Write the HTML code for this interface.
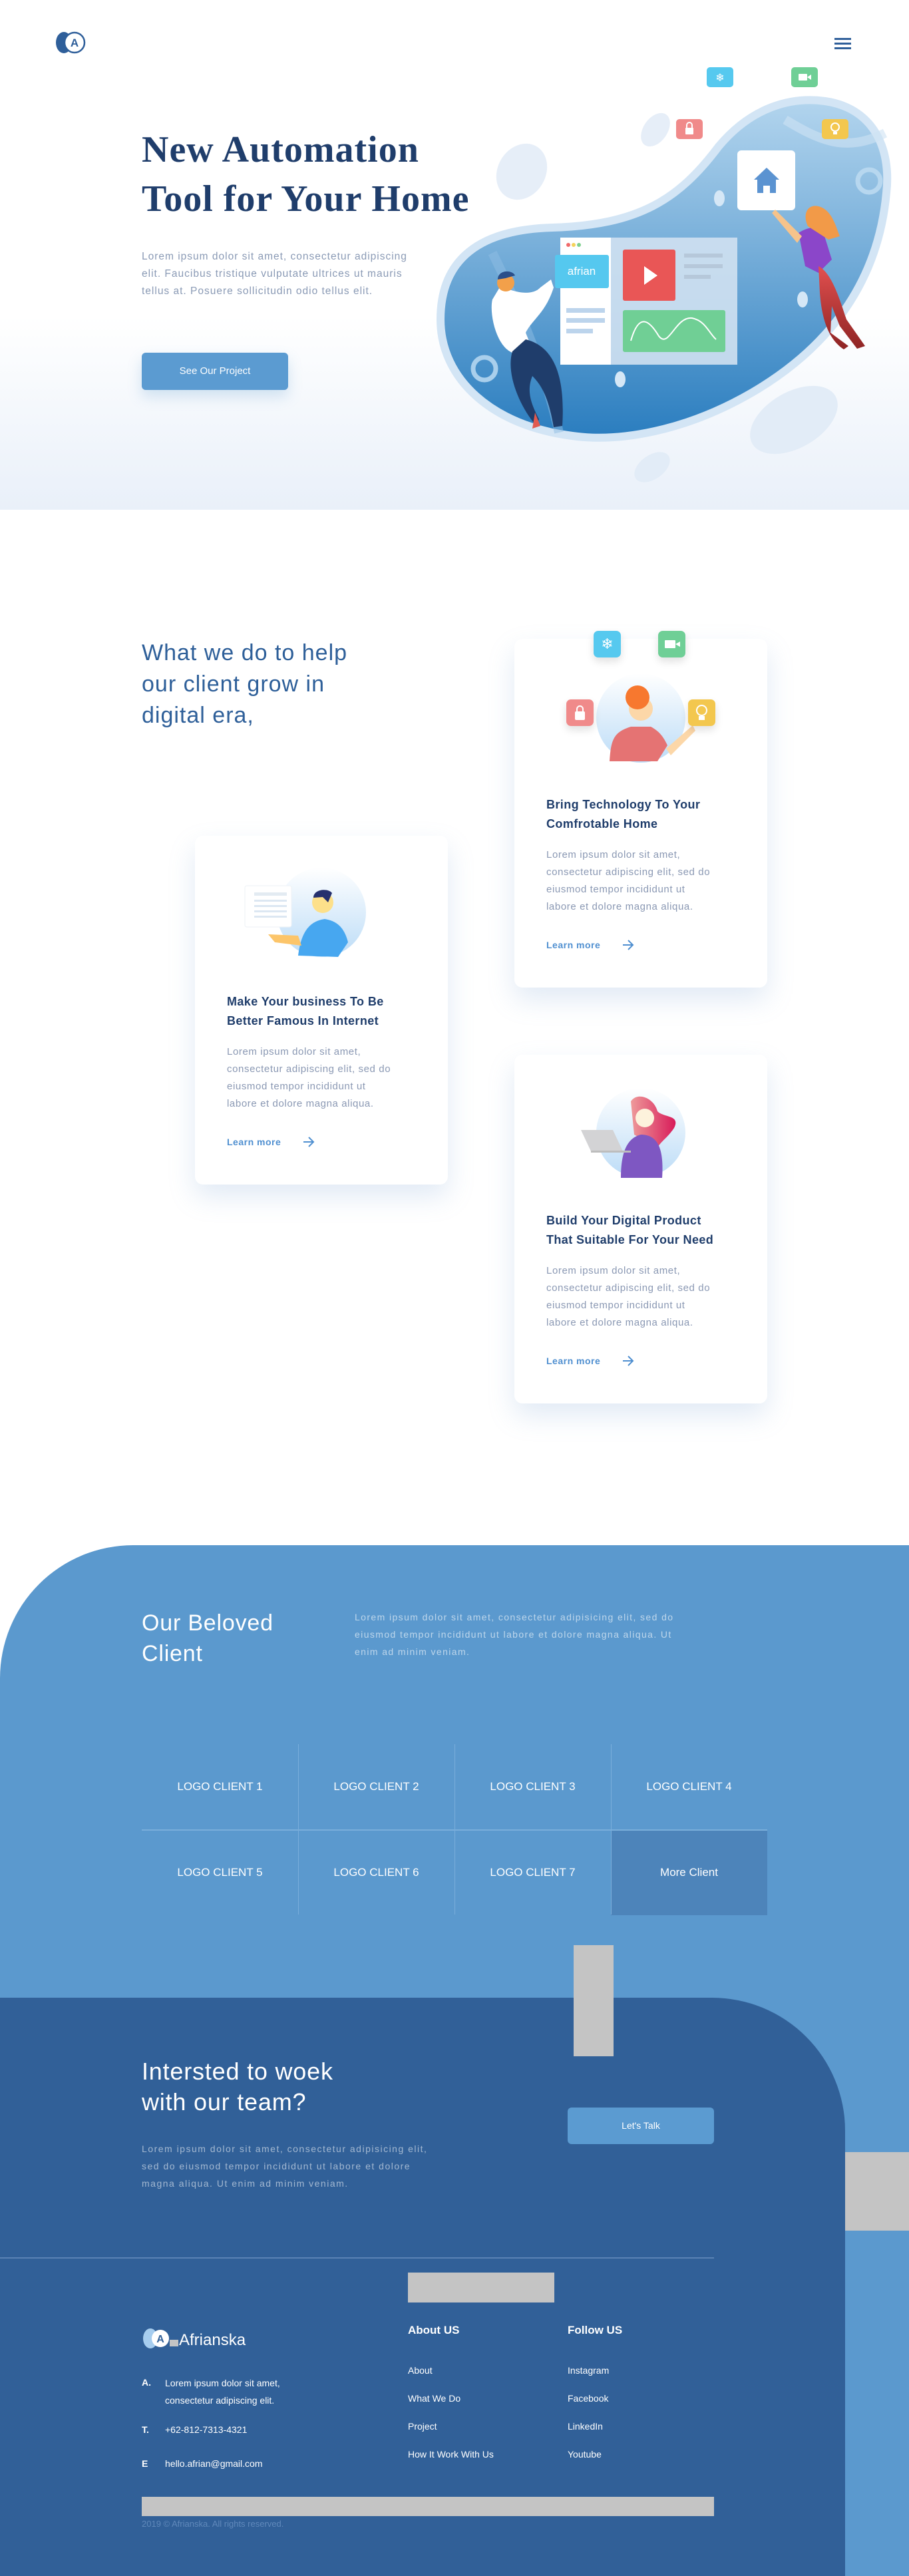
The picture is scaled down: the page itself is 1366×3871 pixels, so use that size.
<!DOCTYPE html>
<html><head><meta charset="utf-8">
<style>
*{margin:0;padding:0;box-sizing:border-box}
body{width:1366px;height:3871px;position:relative;font-family:"Liberation Sans",sans-serif;background:#fff;overflow:hidden}
.a{position:absolute}
.hero{left:0;top:0;width:1366px;height:766px;background:linear-gradient(#fff 0,#fff 62%,#e9f0f9 100%)}
h1{position:absolute;left:213px;top:188px;font-family:"Liberation Serif",serif;font-weight:bold;font-size:56px;line-height:74px;color:#1f3d6b;letter-spacing:1px;white-space:nowrap}
.hp{left:213px;top:373px;width:440px;font-size:15.5px;line-height:26px;color:#8a9ab5;white-space:nowrap;letter-spacing:1px}
.btn{background:#5b9bd1;color:#fff;border-radius:6px;text-align:center;font-size:15px;box-shadow:0 10px 20px rgba(91,155,209,.25)}
.h2{left:213px;top:958px;font-size:34px;line-height:47px;color:#2e5f99;letter-spacing:1px}
.card{width:380px;height:524px;background:#fff;border-radius:12px;box-shadow:0 18px 40px rgba(120,160,210,.22)}
.card .t{position:absolute;left:48px;top:235px;width:330px;font-size:18px;font-weight:bold;line-height:29px;color:#1f3d6b;letter-spacing:.4px;white-space:nowrap}
.card .p{position:absolute;left:48px;top:312px;width:320px;font-size:15px;line-height:26px;color:#8a98b3;letter-spacing:.6px;white-space:nowrap}
.card .l{position:absolute;left:48px;top:452px;font-size:14px;font-weight:bold;color:#4f8fd0;letter-spacing:.5px}
.card .ar{position:absolute;left:162px;top:452px}
.ic{border-radius:7px;box-shadow:0 6px 12px rgba(0,0,0,.12)}
.cl{left:0;top:2322px;width:1366px;height:1549px;background:#5b99ce;border-top-left-radius:200px}
.cell{width:235px;height:128px;color:#fff;font-size:17px;display:flex;align-items:center;justify-content:center}
.dk{left:0;top:3002px;width:1270px;height:869px;background:#316098;border-top-right-radius:200px}
.gray{background:#c4c4c4}
.fl{color:#fff;font-size:14px}
</style></head><body>
<div class="a hero"></div>
<svg class="a" style="left:82px;top:46px" width="50" height="36" viewBox="0 0 50 36"><ellipse cx="14" cy="18" rx="12" ry="16" fill="#2f5f9a"/><circle cx="30" cy="18" r="15" fill="#fff" stroke="#2f5f9a" stroke-width="2.5"/><text x="30" y="24" text-anchor="middle" font-family="Liberation Sans" font-size="17" font-weight="bold" fill="#2f5f9a">A</text></svg>
<div class="a" style="left:1254px;top:57px;width:25px;height:3px;background:#2f5f9a"></div>
<div class="a" style="left:1254px;top:64px;width:25px;height:3px;background:#2f5f9a"></div>
<div class="a" style="left:1254px;top:71px;width:25px;height:3px;background:#2f5f9a"></div>

<h1>New Automation<br>Tool for Your Home</h1>
<div class="a hp">Lorem ipsum dolor sit amet, consectetur adipiscing<br>elit. Faucibus tristique vulputate ultrices ut mauris<br>tellus at. Posuere sollicitudin odio tellus elit.</div>
<div class="a btn" style="left:213px;top:530px;width:220px;height:56px;line-height:56px">See Our Project</div>

<svg class="a" style="left:0;top:0" width="1366" height="766" viewBox="0 0 1366 766">
<defs><linearGradient id="bg" x1="0" y1="0" x2="0" y2="1"><stop offset="0" stop-color="#b3d5ee"/><stop offset="1" stop-color="#2a7dbf"/></linearGradient>
<linearGradient id="rd" x1="0" y1="0" x2="0" y2="1"><stop offset="0" stop-color="#e2504f"/><stop offset="1" stop-color="#8e2424"/></linearGradient></defs>
<ellipse cx="784" cy="258" rx="36" ry="44" fill="#e6eef8" transform="rotate(30 784 258)"/>
<ellipse cx="985" cy="195" rx="18" ry="28" fill="#e6eef8" transform="rotate(35 985 195)"/>
<ellipse cx="1193" cy="631" rx="72" ry="42" fill="#e2ecf7" transform="rotate(-30 1193 631)"/>
<ellipse cx="980" cy="702" rx="30" ry="18" fill="#e2ecf7" transform="rotate(-35 980 702)"/>
<path d="M662 480 C662 390,720 345,830 342 C960 338,1020 300,1080 220 C1130 160,1190 145,1240 152 C1310 162,1340 220,1332 290 C1320 420,1250 520,1130 590 C1030 648,930 665,860 655 C740 640,662 570,662 480Z" fill="url(#bg)" stroke="#d3e5f5" stroke-width="12"/>
<path d="M740 380 C780 460,820 560,840 650" stroke="#8fbde3" stroke-width="14" fill="none" opacity=".5"/>
<path d="M1180 180 C1230 210,1270 230,1330 200" stroke="#cfe3f4" stroke-width="14" fill="none" opacity=".6"/>
<circle cx="728" cy="554" r="17" fill="none" stroke="#a9cfec" stroke-width="7"/>
<circle cx="1306" cy="272" r="17" fill="none" stroke="#b7d7ef" stroke-width="7"/>
<ellipse cx="1081" cy="298" rx="8" ry="12" fill="#d5e7f6"/>
<ellipse cx="1206" cy="450" rx="8" ry="12" fill="#d5e7f6"/>
<ellipse cx="932" cy="570" rx="8" ry="12" fill="#d5e7f6"/>
<rect x="842" y="357" width="266" height="191" fill="#d0e1f1" opacity=".9"/>
<rect x="842" y="357" width="76" height="191" fill="#fff"/>
<circle cx="854" cy="368" r="3" fill="#f06a6a"/><circle cx="862" cy="368" r="3" fill="#f5d25a"/><circle cx="870" cy="368" r="3" fill="#7ed08f"/>
<rect x="834" y="383" width="81" height="50" rx="3" fill="#55c8ef"/>
<text x="874" y="413" text-anchor="middle" font-family="Liberation Sans" font-size="17" fill="#fff">afrian</text>
<rect x="851" y="463" width="58" height="7" fill="#bcd4ec"/><rect x="851" y="478" width="58" height="7" fill="#bcd4ec"/><rect x="851" y="494" width="40" height="7" fill="#bcd4ec"/>
<rect x="936" y="375" width="79" height="77" rx="3" fill="#e95656"/>
<path d="M968 400 L988 414 L968 428Z" fill="#fff"/>
<rect x="1028" y="381" width="58" height="6" fill="#b6c8da"/><rect x="1028" y="397" width="58" height="6" fill="#b6c8da"/><rect x="1028" y="413" width="40" height="6" fill="#b6c8da"/>
<rect x="936" y="466" width="154" height="63" rx="3" fill="#70cf95"/>
<path d="M948 512 C960 470,975 480,990 505 C1005 525,1015 475,1040 478 C1060 482,1065 500,1076 510" stroke="#fff" stroke-width="2" fill="none"/>
<rect x="1108" y="226" width="87" height="90" rx="6" fill="#fff"/>
<path d="M1152 252 L1171 270 H1166 V290 H1157 V279 H1147 V290 H1138 V270 H1133Z" fill="#5b93d1"/>
<path d="M752 430 C775 440,800 445,812 432 L828 420 L832 432 C820 470,800 480,790 500 L800 525 L770 530 C745 520,735 470,740 450Z" fill="#fff"/>
<path d="M790 510 C830 520,850 560,845 640 L832 642 C825 600,815 580,800 565 C790 590,800 610,810 630 L806 640 C780 610,760 560,770 528Z" fill="#1f3d6b"/>
<circle cx="760" cy="425" r="13" fill="#f2a04a"/><path d="M748 420 C748 405,770 405,774 414 L760 418Z" fill="#2b4f8a"/>
<path d="M804 620 L812 640 L800 644Z" fill="#e05a50"/>
<path d="M1200 350 C1215 340,1230 340,1236 345 L1250 390 L1230 410 L1210 400Z" fill="#8b46c9"/>
<path d="M1214 340 C1205 320,1215 306,1230 310 C1250 315,1256 340,1262 355 L1245 360Z" fill="#f29a48"/>
<path d="M1230 400 C1250 410,1262 450,1272 480 L1300 520 L1288 524 L1262 490 L1250 460 L1248 500 L1275 520 L1268 525 C1245 510,1235 480,1232 440Z" fill="url(#rd)"/>
<path d="M1205 355 L1165 315 L1160 320 L1198 365Z" fill="#f6c38b"/>
<rect x="1062" y="101" width="40" height="30" rx="5" fill="#56c9ef"/><text x="1082" y="122" text-anchor="middle" font-size="16" fill="#fff">❄</text>
<rect x="1189" y="101" width="40" height="30" rx="5" fill="#6fcf96"/><rect x="1200" y="111" width="13" height="10" rx="1" fill="#fff"/><path d="M1213 116 L1219 112 V120Z" fill="#fff"/>
<rect x="1016" y="179" width="40" height="30" rx="5" fill="#f08a8a"/><rect x="1030" y="192" width="12" height="10" rx="1" fill="#fff"/><path d="M1032 192 V188 A4 4 0 0 1 1040 188 V192" stroke="#fff" stroke-width="2" fill="none"/>
<rect x="1235" y="179" width="40" height="30" rx="5" fill="#f3c74e"/><circle cx="1255" cy="191" r="6" fill="none" stroke="#fff" stroke-width="2"/><rect x="1252" y="198" width="6" height="4" fill="#fff"/>
</svg>

<div class="a h2">What we do to help<br>our client grow in<br>digital era,</div>

<div class="a card" style="left:773px;top:960px">
<svg class="a" style="left:0;top:0" width="380" height="200"><defs><linearGradient id="cg" x1="0" y1="0" x2="0" y2="1"><stop offset="0" stop-color="#fff"/><stop offset="1" stop-color="#bcdcf7"/></linearGradient></defs>
<circle cx="190" cy="119" r="67" fill="url(#cg)"/>
<path d="M143 184 C145 150,150 140,175 132 L205 132 C220 140,225 150,230 160 L215 184Z" fill="#e57373"/>
<circle cx="190" cy="105" r="18" fill="#fcd7a8"/><circle cx="185" cy="88" r="18" fill="#f7782f"/>
<path d="M228 165 L268 130 L272 138 L235 175Z" fill="#fcd7a8"/>
</svg>
</div>
<div class="a ic" style="left:892px;top:948px;width:41px;height:40px;background:#56c9ef;color:#fff;text-align:center;font-size:22px;line-height:40px">❄</div>
<div class="a ic" style="left:989px;top:948px;width:41px;height:40px;background:#6fcf96"><div class="a" style="left:10px;top:14px;width:16px;height:12px;background:#fff;border-radius:1px"></div><div class="a" style="left:26px;top:16px;border-right:7px solid #fff;border-top:4px solid transparent;border-bottom:4px solid transparent"></div></div>
<div class="a ic" style="left:851px;top:1051px;width:41px;height:40px;background:#f08a8a"><div class="a" style="left:13px;top:18px;width:15px;height:13px;background:#fff;border-radius:2px"></div><div class="a" style="left:15px;top:9px;width:11px;height:12px;border:2.5px solid #fff;border-radius:6px 6px 0 0"></div></div>
<div class="a ic" style="left:1034px;top:1051px;width:41px;height:40px;background:#f3c74e"><div class="a" style="left:12px;top:8px;width:17px;height:17px;border:2.5px solid #fff;border-radius:50%"></div><div class="a" style="left:16px;top:25px;width:9px;height:6px;background:#fff"></div></div>
<div class="a card" style="left:773px;top:960px;background:transparent;box-shadow:none">
<div class="t">Bring Technology To Your<br>Comfrotable Home</div>
<div class="p">Lorem ipsum dolor sit amet,<br>consectetur adipiscing elit, sed do<br>eiusmod tempor incididunt ut<br>labore et dolore magna aliqua.</div>
<div class="l">Learn more</div><svg class="ar" width="18" height="16"><path d="M1 8 H16 M9 1 L16 8 L9 15" stroke="#4f8fd0" stroke-width="2" fill="none"/></svg>
</div>

<div class="a card" style="left:293px;top:1256px">
<svg class="a" style="left:0;top:0" width="380" height="200"><defs><linearGradient id="cg2" x1="0" y1="0" x2="0" y2="1"><stop offset="0" stop-color="#fff"/><stop offset="1" stop-color="#bcdcf7"/></linearGradient></defs>
<circle cx="190" cy="115" r="67" fill="url(#cg2)"/>
<path d="M155 180 C160 140,175 128,195 125 C215 128,225 140,230 160 L215 182Z" fill="#47a7f0"/>
<path d="M155 150 L110 148 L120 160 L160 165Z" fill="#fcc56a"/>
<circle cx="192" cy="100" r="16" fill="#fde08a"/><path d="M178 93 C178 80,200 78,206 86 L200 100 L192 92Z" fill="#26316e"/>
<rect x="75" y="75" width="70" height="62" rx="3" fill="#fff" stroke="#eef2f6"/>
<rect x="89" y="85" width="49" height="5" fill="#e3ebf2"/><rect x="89" y="96" width="49" height="3" fill="#dce7f2"/><rect x="89" y="104" width="49" height="3" fill="#dce7f2"/><rect x="89" y="112" width="49" height="3" fill="#dce7f2"/><rect x="89" y="120" width="49" height="3" fill="#dce7f2"/>
</svg>
<div class="t">Make Your business To Be<br>Better Famous In Internet</div>
<div class="p">Lorem ipsum dolor sit amet,<br>consectetur adipiscing elit, sed do<br>eiusmod tempor incididunt ut<br>labore et dolore magna aliqua.</div>
<div class="l">Learn more</div><svg class="ar" width="18" height="16"><path d="M1 8 H16 M9 1 L16 8 L9 15" stroke="#4f8fd0" stroke-width="2" fill="none"/></svg>
</div>

<div class="a card" style="left:773px;top:1585px">
<svg class="a" style="left:0;top:0" width="380" height="200"><defs><linearGradient id="cg3" x1="0" y1="0" x2="0" y2="1"><stop offset="0" stop-color="#fff"/><stop offset="1" stop-color="#bcdcf7"/></linearGradient><linearGradient id="hr" x1="0" y1="0" x2="1" y2="0"><stop offset="0" stop-color="#ee9a9a"/><stop offset="1" stop-color="#d81b5a"/></linearGradient></defs>
<circle cx="190" cy="117" r="67" fill="url(#cg3)"/>
<path d="M175 70 C185 55,210 65,215 85 C225 95,250 90,240 110 C230 125,220 130,215 140 L180 120Z" fill="url(#hr)"/>
<path d="M160 185 C160 145,170 125,190 120 C215 120,225 140,222 185Z" fill="#7e57c2"/>
<circle cx="196" cy="95" r="14" fill="#fdf2dc"/>
<path d="M100 113 L148 113 L163 145 L115 145Z" fill="#d3d3d5"/><rect x="115" y="144" width="60" height="3" fill="#bdbdbd"/>
</svg>
<div class="t">Build Your Digital Product<br>That Suitable For Your Need</div>
<div class="p">Lorem ipsum dolor sit amet,<br>consectetur adipiscing elit, sed do<br>eiusmod tempor incididunt ut<br>labore et dolore magna aliqua.</div>
<div class="l">Learn more</div><svg class="ar" width="18" height="16"><path d="M1 8 H16 M9 1 L16 8 L9 15" stroke="#4f8fd0" stroke-width="2" fill="none"/></svg>
</div>

<div class="a cl"></div>
<div class="a" style="left:213px;top:2416px;font-size:34px;line-height:46px;color:#fff;letter-spacing:.8px">Our Beloved<br>Client</div>
<div class="a" style="left:533px;top:2417px;width:600px;font-size:14px;line-height:26px;color:rgba(255,255,255,.6);white-space:nowrap;letter-spacing:1.4px">Lorem ipsum dolor sit amet, consectetur adipisicing elit, sed do<br>eiusmod tempor incididunt ut labore et dolore magna aliqua. Ut<br>enim ad minim veniam.</div>
<div class="a" style="left:213px;top:2621px;width:940px;height:256px">
<div class="a cell" style="left:0;top:0">LOGO CLIENT 1</div>
<div class="a cell" style="left:235px;top:0">LOGO CLIENT 2</div>
<div class="a cell" style="left:470px;top:0">LOGO CLIENT 3</div>
<div class="a cell" style="left:705px;top:0">LOGO CLIENT 4</div>
<div class="a cell" style="left:0;top:129px">LOGO CLIENT 5</div>
<div class="a cell" style="left:235px;top:129px">LOGO CLIENT 6</div>
<div class="a cell" style="left:470px;top:129px">LOGO CLIENT 7</div>
<div class="a cell" style="left:705px;top:129px;background:#4d84ba">More Client</div>
<div class="a" style="left:0;top:128px;width:940px;height:2px;background:#7aaedb"></div>
<div class="a" style="left:235px;top:0;width:1px;height:256px;background:#7aaedb"></div>
<div class="a" style="left:470px;top:0;width:1px;height:256px;background:#7aaedb"></div>
<div class="a" style="left:705px;top:0;width:1px;height:256px;background:#7aaedb"></div>
</div>

<div class="a dk"></div>
<div class="a gray" style="left:862px;top:2923px;width:60px;height:167px"></div>
<div class="a gray" style="left:1270px;top:3234px;width:96px;height:118px"></div>
<div class="a" style="left:213px;top:3090px;font-size:36px;line-height:46px;color:#fff;letter-spacing:.8px">Intersted to woek<br>with our team?</div>
<div class="a" style="left:213px;top:3216px;width:520px;font-size:14px;line-height:26px;color:rgba(255,255,255,.55);white-space:nowrap;letter-spacing:1.5px">Lorem ipsum dolor sit amet, consectetur adipisicing elit,<br>sed do eiusmod tempor incididunt ut labore et dolore<br>magna aliqua. Ut enim ad minim veniam.</div>
<div class="a btn" style="left:853px;top:3167px;width:220px;height:55px;line-height:55px;box-shadow:none;font-size:14px">Let's Talk</div>

<div class="a" style="left:0;top:3392px;width:1073px;height:2px;background:#5a82b4"></div>
<div class="a gray" style="left:613px;top:3415px;width:220px;height:45px"></div>
<svg class="a" style="left:213px;top:3496px" width="200" height="36"><ellipse cx="13" cy="18" rx="11" ry="15" fill="#a6cdef"/><circle cx="28" cy="18" r="13" fill="#fff"/><text x="28" y="24" text-anchor="middle" font-family="Liberation Sans" font-size="16" font-weight="bold" fill="#316098">A</text><rect x="42" y="20" width="13" height="10" fill="#c4c4c4"/><text x="56" y="28" font-family="Liberation Sans" font-size="24" fill="#fff">Afrianska</text></svg>
<div class="a" style="left:613px;top:3492px;font-size:17px;font-weight:bold;color:#fff">About US</div>
<div class="a" style="left:853px;top:3492px;font-size:17px;font-weight:bold;color:#fff">Follow US</div>
<div class="a fl" style="left:613px;top:3554px">About</div>
<div class="a fl" style="left:613px;top:3596px">What We Do</div>
<div class="a fl" style="left:613px;top:3638px">Project</div>
<div class="a fl" style="left:613px;top:3680px">How It Work With Us</div>
<div class="a fl" style="left:853px;top:3554px">Instagram</div>
<div class="a fl" style="left:853px;top:3596px">Facebook</div>
<div class="a fl" style="left:853px;top:3638px">LinkedIn</div>
<div class="a fl" style="left:853px;top:3680px">Youtube</div>
<div class="a fl" style="left:213px;top:3572px;font-weight:bold">A.</div>
<div class="a fl" style="left:248px;top:3568px;line-height:26px">Lorem ipsum dolor sit amet,<br>consectetur adipiscing elit.</div>
<div class="a fl" style="left:213px;top:3643px;font-weight:bold">T.</div>
<div class="a fl" style="left:248px;top:3643px">+62-812-7313-4321</div>
<div class="a fl" style="left:213px;top:3694px;font-weight:bold">E</div>
<div class="a fl" style="left:248px;top:3694px">hello.afrian@gmail.com</div>
<div class="a gray" style="left:213px;top:3752px;width:860px;height:29px"></div>
<div class="a" style="left:213px;top:3785px;font-size:13px;color:#6089bb">2019 © Afrianska. All rights reserved.</div>
</body></html>
